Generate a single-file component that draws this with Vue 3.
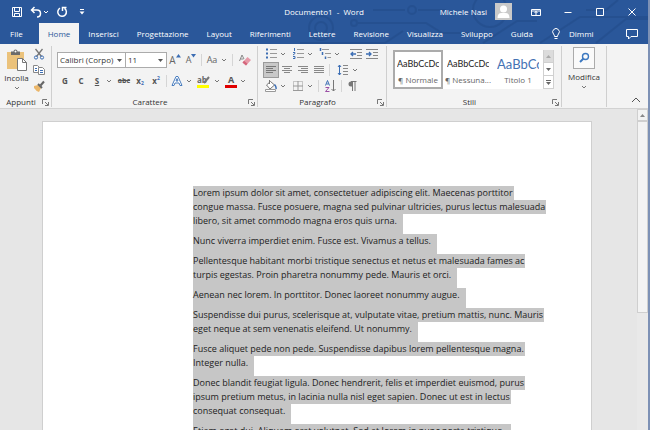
<script setup>
import { h, ref } from 'vue'

const tabs = ['Home', 'Inserisci', 'Progettazione', 'Layout', 'Riferimenti', 'Lettere', 'Revisione', 'Visualizza', 'Sviluppo', 'Guida']
const activeTab = ref('Home')

const styles = [
  { sample: 'AaBbCcDc', name: '¶ Normale' },
  { sample: 'AaBbCcDc', name: '¶ Nessuna...' },
  { sample: 'AaBbCc', name: 'Titolo 1', heading: true }
]
const activeStyle = ref('¶ Normale')

const paragraphs = [
  ['Lorem ipsum dolor sit amet, consectetuer adipiscing elit. Maecenas porttitor', 'congue massa. Fusce posuere, magna sed pulvinar ultricies, purus lectus malesuada', 'libero, sit amet commodo magna eros quis urna.'],
  ['Nunc viverra imperdiet enim. Fusce est. Vivamus a tellus.'],
  ['Pellentesque habitant morbi tristique senectus et netus et malesuada fames ac', 'turpis egestas. Proin pharetra nonummy pede. Mauris et orci.'],
  ['Aenean nec lorem. In porttitor. Donec laoreet nonummy augue.'],
  ['Suspendisse dui purus, scelerisque at, vulputate vitae, pretium mattis, nunc. Mauris', 'eget neque at sem venenatis eleifend. Ut nonummy.'],
  ['Fusce aliquet pede non pede. Suspendisse dapibus lorem pellentesque magna.', 'Integer nulla.'],
  ['Donec blandit feugiat ligula. Donec hendrerit, felis et imperdiet euismod, purus', 'ipsum pretium metus, in lacinia nulla nisl eget sapien. Donec ut est in lectus', 'consequat consequat.'],
  ['Etiam eget dui. Aliquam erat volutpat. Sed at lorem in nunc porta tristique.']
]

const Caret = () =>
  h('svg', { class: 'caret', viewBox: '0 0 8 8', width: 8, height: 8 }, [
    h('path', { d: 'M2 3l2 2 2-2', fill: 'none', stroke: 'currentColor' })
  ])

const Launcher = () =>
  h('button', { class: 'launcher', 'aria-label': 'Opzioni' }, [
    h('svg', { viewBox: '0 0 7 7', width: 7, height: 7 }, [
      h('path', { d: 'M.5 5V.5H5M3 3l3 3M6.5 3v3.5H3', fill: 'none', stroke: '#777' })
    ])
  ])
</script>

<template>
  <div class="window">
    <header class="top">
      <svg class="circuit" viewBox="0 0 370 44" width="370" height="44" aria-hidden="true">
        <g fill="none" stroke="#224b88" stroke-width="2">
          <circle cx="43" cy="28" r="12" />
          <circle cx="43" cy="28" r="6" />
          <path d="M78 23h70l16 10h30M95 10h32M140 10h28M205 43l34-22h20M262 43l40-26h68M318 43l30-24h22M340 0l-12 10h-20M22 43h85l18-12" />
          <circle cx="76" cy="23" r="3" />
          <circle cx="134" cy="10" r="4" />
          <circle cx="212" cy="10" r="17" />
        </g>
      </svg>
      <div class="titlebar">
        <div class="quick">
          <button aria-label="Salva">
            <svg width="12" height="12" viewBox="0 0 12 12" fill="none" stroke="#fff"><path d="M1.5 1.5h9v9h-9zM3.500 1.500v4h5v-4M3.500 10.500v-3h5v3" /></svg>
          </button>
          <button aria-label="Annulla" class="undo">
            <svg width="12" height="12" viewBox="0 0 12 12" fill="none" stroke="#fff" stroke-width="1.500"><path d="M4.500 1L1.500 4l3 3M2 4h5q3.500 0 3.500 3.500T7 11" /></svg>
            <Caret />
          </button>
          <button aria-label="Ripeti">
            <svg width="12" height="12" viewBox="0 0 12 12" fill="none" stroke="#fff" stroke-width="1.500"><path d="M4 2.200a4.300 4.300 0 1 0 4.500.2M6.500 5V1.500H10.500" /></svg>
          </button>
          <button aria-label="Personalizza" class="custom">
            <svg width="8" height="8" viewBox="0 0 8 8"><path d="M2 1.500h4" stroke="#fff" /><path d="M1.500 3.500h5L4 6.500z" fill="#fff" /></svg>
          </button>
        </div>
        <h1>Documento1&nbsp; -&nbsp; Word</h1>
        <div class="account">
          <span>Michele Nasi</span>
          <svg class="avatar" width="17" height="17" viewBox="0 0 17 17"><path d="M0 0h17v17H0z" fill="#c9c9c9" /><circle cx="8.500" cy="6" r="3.500" fill="#fff" /><path d="M2.500 15q0-5 4-5h4q4 0 4 5z" fill="#fff" /></svg>
          <button aria-label="Opzioni barra multifunzione"><svg width="10" height="10" viewBox="0 0 10 10" fill="none" stroke="#fff"><path d="M.5 2.500h9v6h-9zM.5 4h9M5 8V4M3.500 6L5 4.500 6.500 6" /></svg></button>
          <button aria-label="Riduci"><svg width="10" height="10" viewBox="0 0 10 10"><path d="M1.500 5.500h7" stroke="#fff" /></svg></button>
          <button aria-label="Ingrandisci"><svg width="10" height="10" viewBox="0 0 10 10"><path d="M1.500 1.500h7v7h-7z" fill="none" stroke="#fff" /></svg></button>
          <button aria-label="Chiudi"><svg width="10" height="10" viewBox="0 0 10 10"><path d="M1.500 1.500l7 7M8.500 1.500l-7 7" stroke="#fff" /></svg></button>
        </div>
      </div>
      <nav class="tabs">
        <button class="file">File</button>
        <button v-for="t in tabs" :key="t" :class="{ active: t === activeTab }" @click="activeTab = t">{{ t }}</button>
        <button class="tell">
          <svg width="10" height="12" viewBox="0 0 10 12" fill="none" stroke="#fff"><path d="M3.500 8.500q0-1.500-1-2.500a3.300 3.300 0 1 1 5 0q-1 1-1 2.500zM3.500 10.500h3" /></svg>
          Dimmi
        </button>
        <button class="comment" aria-label="Commenti">
          <svg width="12" height="12" viewBox="0 0 12 12" fill="none" stroke="#fff"><path d="M.5 1.500h11v7H5L2.500 11V8.500h-2z" /></svg>
        </button>
      </nav>
    </header>

    <section class="ribbon">
      <div class="group clipboard">
        <div class="controls">
          <button class="big">
            <svg width="22" height="22" viewBox="0 0 22 22"><path d="M1 3h17v17H1z" fill="#ebc27b" /><path d="M5 2.500h2.500a2 2 0 0 1 4 0H14V6H5z" fill="#6b6b6b" /><circle cx="9.500" cy="2.500" r="1" fill="#fff" /><path d="M11.500 9.500h5l4 4v8h-9z" fill="#fff" stroke="#777" /><path d="M16.500 9.500v4h4" fill="none" stroke="#777" /></svg>
            <span>Incolla</span>
            <Caret />
          </button>
          <div class="stack">
            <button aria-label="Taglia"><svg width="12" height="12" viewBox="0 0 12 12" fill="none"><path d="M2.500 1l6 7.500M9.500 1l-6 7.500" stroke="#777" stroke-width="1.300" /><circle cx="3" cy="9.500" r="1.600" stroke="#3c6eb4" /><circle cx="9" cy="9.500" r="1.600" stroke="#3c6eb4" /></svg></button>
            <button aria-label="Copia"><svg width="12" height="12" viewBox="0 0 12 12" fill="#fff"><path d="M.5 1.500h4l2 2v5h-6z" stroke="#888" /><path d="M5.500 3.500h4l2 2v5h-6z" stroke="#888" /><path d="M2 4.500h2M2 6.500h2M7 6.500h3M7 8.500h3" stroke="#3c6eb4" /></svg></button>
            <button aria-label="Copia formato"><svg width="12" height="12" viewBox="0 0 12 12"><path d="M1 6l4-1 3 3-2 4q-3-1-5-4z" fill="#ebb76b" /><path d="M5 4l4 4" stroke="#666" stroke-width="2" /><path d="M7.500 5.500L11 1.500" stroke="#666" stroke-width="2" /></svg></button>
          </div>
        </div>
        <footer><span>Appunti</span><Launcher /></footer>
      </div>

      <div class="group font">
        <div class="controls rows">
          <div class="row combos">
            <label class="combo family"><select aria-label="Tipo di carattere"><option>Calibri (Corpo)</option></select><svg width="5" height="3" viewBox="0 0 5 3"><path d="M0 0h5L2.500 3z" fill="#555" /></svg></label>
            <label class="combo size"><select aria-label="Dimensione"><option>11</option></select><svg width="5" height="3" viewBox="0 0 5 3"><path d="M0 0h5L2.500 3z" fill="#555" /></svg></label>
            <button class="letter grow" aria-label="Ingrandisci carattere">A<svg width="5" height="4" viewBox="0 0 5 4"><path d="M0 3.500h5L2.500 0z" fill="#3c6eb4" /></svg></button>
            <button class="letter shrink" aria-label="Riduci carattere">A<svg width="5" height="4" viewBox="0 0 5 4"><path d="M0 0h5L2.500 3.500z" fill="#3c6eb4" /></svg></button>
            <i class="sep" />
            <button class="split case"><span class="glyph">Aa</span><Caret /></button>
            <i class="sep wide" />
            <button aria-label="Cancella formattazione"><svg width="12" height="12" viewBox="0 0 12 12"><path d="M.5 7L3 1l2 4M1.500 5h3" fill="none" stroke="#888" /><path d="M3.500 8.500L8.500 3 12 6 7 11.500z" fill="#e79aa8" /><path d="M3.500 8.500l1.600-1.700 3.400 3-1.500 1.700z" fill="#d4657b" /></svg></button>
          </div>
          <div class="row">
            <button class="b">G</button>
            <button class="b">C</button>
            <button class="split"><span class="glyph b u">S</span><Caret /></button>
            <i class="gap" />
            <button class="b abc">abc</button>
            <button class="b">x<sub>2</sub></button>
            <button class="b">x<sup>2</sup></button>
            <i class="sep" />
            <button class="split" aria-label="Effetti testo"><svg width="12" height="12" viewBox="0 0 12 12"><path d="M1 10.500L5 1.500h2l4 9H9L8 8H4l-1 2.500zM5 6h2L6 3.500z" fill="#fff" stroke="#4a7ebf" /></svg><Caret /></button>
            <i class="gap" />
            <button class="split" aria-label="Evidenziatore"><svg width="14" height="13" viewBox="0 0 14 13" class="marker"><text x="0" y="8" font-size="8" font-weight="700" fill="#666">ab</text><path d="M7 8l5-6" stroke="#777" stroke-width="2" /><path d="M0 10h12v3H0z" fill="#ff0" /></svg><Caret /></button>
            <i class="gap" />
            <button class="split" aria-label="Colore carattere"><span class="glyph ink">A</span><Caret /></button>
          </div>
        </div>
        <footer><span>Carattere</span><Launcher /></footer>
      </div>

      <div class="group para">
        <div class="controls rows">
          <div class="row">
            <button class="split" aria-label="Elenco puntato"><svg width="12" height="12" viewBox="0 0 12 12"><path d="M1 1.500h2M1 5.500h2M1 9.500h2" stroke="#3c6eb4" stroke-width="2" /><path d="M5 1.500h7M5 5.500h7M5 9.500h7" stroke="#999" /></svg><Caret /></button>
            <i class="gap" />
            <button class="split" aria-label="Elenco numerato"><svg width="12" height="12" viewBox="0 0 12 12"><path d="M2.500 0v3M1 4.500h2v1L1 7M1 8.500h2v2H1" fill="none" stroke="#3c6eb4" /><path d="M5 1.500h7M5 5.500h7M5 9.500h7" stroke="#999" /></svg><Caret /></button>
            <i class="gap" />
            <button class="split" aria-label="Elenco a più livelli"><svg width="12" height="12" viewBox="0 0 12 12"><path d="M1.500 0v3M3.500 4v3M6.500 8.500v2.500" stroke="#3c6eb4" stroke-width="1.500" /><path d="M3 1.500h7M6 5.500h6M8.500 9.500H12" stroke="#999" /></svg><Caret /></button>
            <i class="gap long" />
            <button aria-label="Riduci rientro"><svg width="12" height="12" viewBox="0 0 12 12"><path d="M0 1.500h12M7 4.500h5M7 7.500h5M0 10.500h12" stroke="#888" /><path d="M6 6H1M3 4L1 6l2 2" fill="none" stroke="#3c6eb4" stroke-width="1.300" /></svg></button>
            <button aria-label="Aumenta rientro"><svg width="12" height="12" viewBox="0 0 12 12"><path d="M0 1.500h12M7 4.500h5M7 7.500h5M0 10.500h12" stroke="#888" /><path d="M0 6h5M3 4l2 2-2 2" fill="none" stroke="#3c6eb4" stroke-width="1.300" /></svg></button>
          </div>
          <div class="row">
            <button class="on" aria-label="Allinea a sinistra"><svg width="10" height="10" viewBox="0 0 10 10"><path d="M0 1.500h10M0 3.500h7M0 5.500h10M0 7.500h7" stroke="#777" /></svg></button>
            <button aria-label="Centra"><svg width="10" height="10" viewBox="0 0 10 10"><path d="M0 1.500h10M2 3.500h6M0 5.500h10M2 7.500h6" stroke="#888" /></svg></button>
            <button aria-label="Allinea a destra"><svg width="10" height="10" viewBox="0 0 10 10"><path d="M0 1.500h10M3 3.500h7M0 5.500h10M3 7.500h7" stroke="#888" /></svg></button>
            <button aria-label="Giustifica"><svg width="10" height="10" viewBox="0 0 10 10"><path d="M0 1.500h10M0 3.500h10M0 5.500h10M0 7.500h10" stroke="#888" /></svg></button>
            <i class="sep" />
            <i class="gap" />
            <button class="split" aria-label="Interlinea"><svg width="12" height="12" viewBox="0 0 12 12"><path d="M2.500 1v10M1 3l1.500-2L4 3M1 9l1.500 2L4 9" fill="none" stroke="#3c6eb4" /><path d="M6 1.500h5M6 4.500h5M6 7.500h5M6 10.500h5" stroke="#888" /></svg><Caret /></button>
          </div>
          <div class="row">
            <button class="split" aria-label="Sfondo"><svg width="12" height="12" viewBox="0 0 12 12"><path d="M1.500 5l4-3.500L9.500 5l-4.500 4zM4.500 0v4" fill="#fff" stroke="#777" /><path d="M9.500 4.500q2 2 1.500 4.500" fill="none" stroke="#3c6eb4" stroke-width="1.500" /><path d="M.5 9.500h10v2H.5z" fill="#fff" stroke="#999" /></svg><Caret /></button>
            <i class="gap" />
            <button class="split" aria-label="Bordi"><svg width="12" height="12" viewBox="0 0 12 12" fill="none" stroke="#999"><path d="M1.500 1.500h9v9h-9z" stroke-dasharray="1 1" /><path d="M1 6h10M6 1v10M1 10.500h10" /></svg><Caret /></button>
            <i class="sep wide" />
            <button aria-label="Ordina"><svg width="12" height="12" viewBox="0 0 12 12" fill="none"><path d="M.5 5.500l2-5 2 5M1.500 4h2" stroke="#3c6eb4" /><path d="M.5 7.500H4L.5 11.500H4.500" stroke="#9a4fa5" /><path d="M8.500 0v11M6.500 9l2 2 2-2" stroke="#777" /></svg></button>
            <i class="sep" />
            <button aria-label="Mostra tutto"><svg width="10" height="12" viewBox="0 0 10 12"><path d="M5 1.500H4a2.500 2.500 0 0 0 0 5h1.500z" fill="#777" /><path d="M4 1.500h5.500M5.500 1.500V11M8 1.500V11" stroke="#777" /></svg></button>
          </div>
        </div>
        <footer><span>Paragrafo</span><Launcher /></footer>
      </div>

      <div class="group styles">
        <div class="controls">
          <div class="gallery">
            <button v-for="s in styles" :key="s.name" class="style" :class="{ chosen: s.name === activeStyle, heading: s.heading }" @click="activeStyle = s.name">
              <span class="sample">{{ s.sample }}</span>
              <span class="name">{{ s.name }}</span>
            </button>
            <div class="scroller">
              <button class="dim" aria-label="Su"><svg width="5" height="3" viewBox="0 0 5 3"><path d="M0 3h5L2.500 0z" fill="#aaa" /></svg></button>
              <button aria-label="Giù"><svg width="5" height="3" viewBox="0 0 5 3"><path d="M0 0h5L2.500 3z" fill="#666" /></svg></button>
              <button aria-label="Altro"><svg width="5" height="5" viewBox="0 0 5 5"><path d="M0 .5h5" stroke="#666" /><path d="M0 2h5L2.500 5z" fill="#666" /></svg></button>
            </div>
          </div>
        </div>
        <footer><span>Stili</span><Launcher /></footer>
      </div>

      <div class="group edit">
        <button class="big find">
          <span class="lens"><svg width="12" height="12" viewBox="0 0 12 12" fill="none" stroke="#3c78c0"><circle cx="7.500" cy="4.500" r="3" stroke-width="1.400" /><path d="M5.500 6.500L2 10" stroke-width="2" /></svg></span>
          <span>Modifica</span>
          <Caret />
        </button>
      </div>
      <button class="collapse" aria-label="Comprimi"><svg width="10" height="6" viewBox="0 0 10 6"><path d="M1 5l4-4 4 4" fill="none" stroke="#555" /></svg></button>
    </section>

    <main class="desk">
      <article class="page">
        <p v-for="(p, i) in paragraphs" :key="i">
          <span v-for="line in p" :key="line">{{ line }}</span>
        </p>
      </article>
      <div class="scrollbar">
        <button aria-label="Scorri su"><svg width="5" height="3" viewBox="0 0 5 3"><path d="M0 3h5L2.500 0z" fill="#888" /></svg></button>
        <div class="thumb" />
      </div>
    </main>
  </div>
</template>

<style>
body {
  margin: 0;
  overflow: hidden;
}
</style>

<style scoped>
.window {
  display: flex;
  flex-direction: column;
  height: 100vh;
  box-sizing: border-box;
  border-right: 2px solid #7d91b5;
  background: #e6e6e6;
  color: #333;
  font: 8px/12px "Open Sans", "Noto Sans", sans-serif;
  overflow: hidden;
}
button {
  display: flex;
  align-items: center;
  justify-content: center;
  margin: 0;
  padding: 0;
  border: 0;
  background: none;
  color: inherit;
  font: inherit;
  white-space: nowrap;
}
svg {
  display: block;
  flex: none;
}
.top {
  position: relative;
  flex: none;
  background: #2a579a;
  color: #fff;
}
.circuit {
  position: absolute;
  right: 0;
  top: 0;
  opacity: 0.5;
}
.titlebar {
  position: relative;
  display: grid;
  grid-template-columns: 1fr auto 1fr;
  align-items: center;
  height: 23px;
}
.quick {
  display: flex;
  align-items: center;
  gap: 6px;
  padding-left: 11px;
}
.undo {
  padding-left: 1px;
}
.custom {
  padding-left: 4px;
}
h1 {
  margin: 0;
  font-size: 8px;
  font-weight: 400;
}
.account {
  display: flex;
  align-items: center;
  justify-content: flex-end;
}
.account .avatar {
  margin: 0 8px;
}
.account button {
  width: 32px;
  height: 20px;
}
.tabs {
  position: relative;
  display: flex;
  height: 21px;
}
.tabs button {
  padding: 0 9px;
}
.tabs .file {
  padding: 0 16px 0 10px;
}
.tabs .active {
  background: #f3f3f3;
  color: #2a579a;
}
.tabs .tell {
  gap: 8px;
}
.tabs .comment {
  margin-left: auto;
  padding: 0 10px;
}
.ribbon {
  display: flex;
  flex: none;
  height: 64px;
  background: #f3f3f3;
  border-bottom: 1px solid #d2d2d2;
}
.group {
  display: flex;
  flex-direction: column;
  flex: none;
  box-sizing: border-box;
  margin: 2px 0 1px;
  border-right: 1px solid #cfcfcf;
}
.controls {
  display: flex;
  flex: 1;
  min-height: 0;
}
.group footer {
  display: flex;
  align-items: center;
  flex: none;
  height: 10px;
}
.group footer span {
  flex: 1;
  text-align: center;
}
.launcher {
  width: 9px;
  padding-right: 2px;
}
.clipboard {
  width: 52px;
}
.big {
  flex-direction: column;
  justify-content: flex-start;
  padding: 3px 0 0;
}
.clipboard .big {
  width: 33px;
}
.big svg + span {
  margin-top: 1px;
}
.stack {
  display: flex;
  flex-direction: column;
  width: 12px;
}
.stack button {
  height: 16px;
}
.font {
  width: 206px;
}
.rows {
  flex-direction: column;
  padding-left: 5px;
}
.row {
  display: flex;
  align-items: center;
  height: 16px;
}
.font .rows {
  gap: 5px;
  padding-top: 6px;
}
.row button {
  width: 16px;
  height: 16px;
}
.row .split {
  width: 24px;
}
.split .glyph,
.split svg:first-child {
  margin: 0 2px;
}
.split .marker {
  margin: 0 0 0 2px;
}
.split .glyph {
  width: 12px;
  text-align: center;
}
.caret {
  color: #777;
}
.undo .caret {
  color: #fff;
}
.combo {
  display: flex;
  align-items: center;
  box-sizing: border-box;
  height: 16px;
  padding-right: 3px;
  border: 1px solid #ababab;
  background: #fff;
}
.family {
  width: 69px;
}
.size {
  width: 41px;
  border-left: 0;
}
select {
  flex: 1;
  min-width: 0;
  padding: 0 0 0 2px;
  border: 0;
  appearance: none;
  background: none;
  color: #333;
  font: inherit;
}
.letter {
  color: #666;
  font-size: 10px;
}
.letter svg {
  align-self: flex-start;
  margin-top: 2px;
}
.letter.shrink {
  font-size: 9px;
}
.case .glyph {
  color: #666;
  font-size: 9px;
}
.sep {
  width: 1px;
  height: 12px;
  margin: 0 2px;
  background: #d5d5d5;
}
.wide {
  margin: 0 4px;
}
.gap {
  width: 3px;
}
.long {
  width: 7px;
}
.b {
  color: #555;
  font-weight: 700;
}
.u {
  text-decoration: underline;
}
.abc {
  font-size: 7px;
  text-decoration: line-through;
}
sub,
sup {
  color: #3c6eb4;
  font-size: 5px;
  line-height: 5px;
}
sub {
  align-self: flex-end;
  padding-bottom: 3px;
}
sup {
  align-self: flex-start;
  padding-top: 3px;
}
.ink {
  box-sizing: border-box;
  height: 13px;
  border-bottom: 3px solid #e00000;
  color: #555;
  font-weight: 700;
  font-size: 9px;
  line-height: 10px;
}
.para {
  width: 129px;
}
.row .on {
  box-sizing: border-box;
  border: 1px solid #9a9a9a;
  background: #c8c8c8;
}
.styles {
  width: 175px;
}
.styles .controls {
  padding: 4px 7px 8px 6px;
}
.gallery {
  display: flex;
  flex: 1;
  min-width: 0;
  background: #fff;
}
.style {
  flex: 1 1 0;
  flex-direction: column;
  align-items: center;
  min-width: 0;
  box-sizing: border-box;
  padding: 3px 0 1px;
  gap: 2px;
  border: 2px solid transparent;
  overflow: hidden;
}
.chosen {
  border-color: #ababab;
}
.sample {
  width: 42px;
  height: 16px;
  color: #222;
  font: 9px/16px Lato, sans-serif;
  text-align: left;
  overflow: hidden;
}
.heading .sample {
  color: #4472b4;
  font-size: 13px;
}
.name {
  color: #666;
}
.scroller {
  display: flex;
  flex-direction: column;
  flex: none;
  width: 11px;
}
.scroller button {
  flex: 1;
  border: 1px solid #d0d0d0;
  border-top: 0;
}
.scroller .dim {
  background: #dcdcdc;
}
.edit {
  width: 45px;
}
.find {
  padding: 1px 0 0;
}
.lens {
  display: flex;
  align-items: center;
  justify-content: center;
  box-sizing: border-box;
  width: 22px;
  height: 22px;
  margin-bottom: 2px;
  border: 1px solid #ababab;
  background: #fafafa;
}
.collapse {
  align-self: flex-end;
  margin-left: auto;
  padding: 0 7px 5px;
}
.desk {
  display: flex;
  flex: 1;
  min-height: 0;
  padding-left: 42px;
}
.page {
  flex: 1;
  margin: 12px 45px 0 0;
  padding: 64px 40px 0 150px;
  border: 1px solid #cfcfcf;
  border-bottom: 0;
  background: #fff;
  color: #222;
  font: 9px/14px "Open Sans", sans-serif;
  overflow: hidden;
}
p {
  margin: 0;
}
p span {
  display: block;
  width: fit-content;
  padding-right: 1px;
  background: #c6c6c6;
  white-space: nowrap;
}
p span:last-child {
  padding: 0 6px 6px 0;
}
.scrollbar {
  display: flex;
  flex-direction: column;
  width: 11px;
  background: #e9e9e9;
}
.scrollbar button {
  height: 12px;
  border: 1px solid #cfcfcf;
  background: #f3f3f3;
}
.thumb {
  height: 190px;
  border: 1px solid #cfcfcf;
  background: #f3f3f3;
}
</style>
